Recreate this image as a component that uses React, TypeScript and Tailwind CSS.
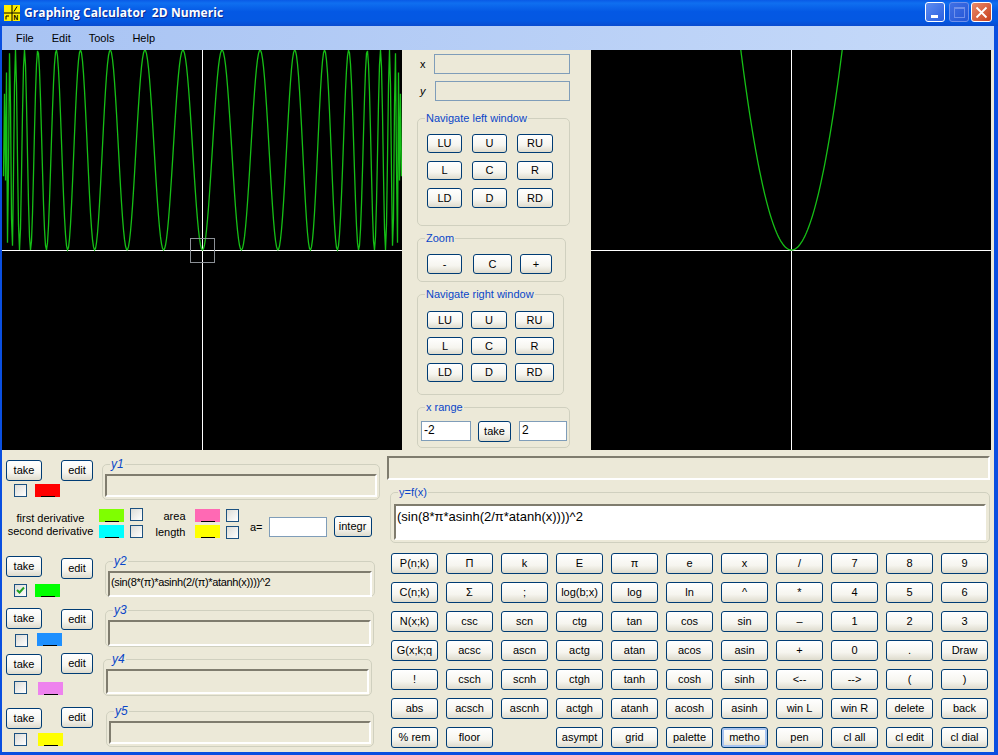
import React from "react";

function leftCurve(): string {
  const pts: string[] = [];
  for (let p = 0.5; p < 400; p += 1) {
    const x = (p - 200.5) / 200;
    if (Math.abs(x) >= 1) continue;
    const v = Math.sin(8 * Math.PI * Math.asinh((2 / Math.PI) * Math.atanh(x))) ** 2;
    pts.push(`${p.toFixed(2)},${(200 - 200 * v).toFixed(2)}`);
  }
  return pts.join(" ");
}

function rightCurve(): string {
  const pts: string[] = [];
  for (let dx = -54; dx <= 54; dx += 1) {
    pts.push(`${200.5 + dx},${(200 - 200 * (dx / 50.7) ** 2).toFixed(2)}`);
  }
  return pts.join(" ");
}

function Plot({ points, box }: { points: string; box?: boolean }) {
  return (
    <svg viewBox="0 0 400 400" className="w-[400px] h-[400px] shrink-0 bg-black block">
      <line x1="200.5" y1="0" x2="200.5" y2="400" stroke="#ffffff" strokeWidth="1" />
      <line x1="0" y1="200.5" x2="400" y2="200.5" stroke="#ffffff" strokeWidth="1" />
      <polyline points={points} fill="none" stroke="#16bf16" strokeWidth="1.3" />
      {box && <rect x="188.5" y="188.5" width="24" height="24" fill="none" stroke="#8b9096" strokeWidth="1" />}
    </svg>
  );
}

function Btn({ children, className = "", focused }: { children?: React.ReactNode; className?: string; focused?: boolean }) {
  return (
    <button
      className={`flex items-center justify-center shrink-0 border border-[#003c74] rounded-[3px] bg-[linear-gradient(180deg,#ffffff_0%,#f6f5ef_60%,#dedbcd_100%)] text-[11px] leading-none text-black ${focused ? "shadow-[inset_0_0_0_2px_#a8c4f0]" : ""} ${className}`}
    >
      {children}
    </button>
  );
}

function Group({ label, className = "", legendClass = "", children }: { label: string; className?: string; legendClass?: string; children?: React.ReactNode }) {
  return (
    <fieldset className={`border border-[#d0d0bf] rounded-[5px] shrink-0 min-w-0 ${className}`}>
      <legend className={`text-[#0a46c8] leading-[14px] px-[1px] ${legendClass}`}>{label}</legend>
      {children}
    </fieldset>
  );
}

function Sunken({ className = "", children }: { className?: string; children?: React.ReactNode }) {
  return (
    <div className={`border-t-2 border-l-2 border-t-[#7f7c6e] border-l-[#7f7c6e] border-r-2 border-b-2 border-r-white border-b-white ${className}`}>
      {children}
    </div>
  );
}

function Check({ checked, className = "" }: { checked?: boolean; className?: string }) {
  return (
    <div className={`w-[13px] h-[13px] shrink-0 border border-[#1c5180] bg-[linear-gradient(135deg,#dcdcd7,#ffffff)] flex items-center justify-center ${className}`}>
      {checked && (
        <svg viewBox="0 0 11 11" className="w-[11px] h-[11px]">
          <path d="M2 5 L4.5 7.5 L9 2.5" fill="none" stroke="#21a121" strokeWidth="2" />
        </svg>
      )}
    </div>
  );
}

function Swatch({ color, className = "" }: { color: string; className?: string }) {
  return (
    <div className={`w-[25px] h-[13px] shrink-0 flex items-end justify-center ${color} ${className}`}>
      <div className="w-[14px] h-[1px] bg-black" />
    </div>
  );
}

function FnRow(p: {
  label: string;
  rowClass: string;
  takeClass: string;
  editClass: string;
  lineClass: string;
  checkClass: string;
  swatchClass: string;
  color: string;
  checked?: boolean;
  leftClass: string;
  groupClass: string;
  innerClass: string;
  legendClass: string;
  text?: string;
}) {
  return (
    <div className={`flex shrink-0 ${p.rowClass}`}>
      <div className={`shrink-0 flex flex-col ${p.leftClass}`}>
        <div className={`flex items-start shrink-0 ${p.lineClass}`}>
          <Btn className={`w-[36px] h-[21px] ml-[4px] ${p.takeClass}`}>take</Btn>
          <Btn className={`w-[32px] h-[21px] ml-[19px] ${p.editClass}`}>edit</Btn>
        </div>
        <div className="flex items-start">
          <Check className={p.checkClass} checked={p.checked} />
          <Swatch color={p.color} className={p.swatchClass} />
        </div>
      </div>
      <Group label={p.label} className={`px-[2px] h-full ${p.groupClass}`} legendClass={`italic text-[12px] ${p.legendClass}`}>
        <Sunken className={`mt-[3px] flex items-start pl-[1px] pt-[2px] text-[11px] tracking-[-0.35px] leading-[14px] ${p.innerClass}`}>
          {p.text}
        </Sunken>
      </Group>
    </div>
  );
}

const keys: string[][] = [
  ["P(n;k)", "Π", "k", "Ε", "π", "e", "x", "/", "7", "8", "9"],
  ["C(n;k)", "Σ", ";", "log(b;x)", "log", "ln", "^", "*", "4", "5", "6"],
  ["N(x;k)", "csc", "scn", "ctg", "tan", "cos", "sin", "–", "1", "2", "3"],
  ["G(x;k;q", "acsc", "ascn", "actg", "atan", "acos", "asin", "+", "0", ".", "Draw"],
  ["!", "csch", "scnh", "ctgh", "tanh", "cosh", "sinh", "<--", "-->", "(", ")"],
  ["abs", "acsch", "ascnh", "actgh", "atanh", "acosh", "asinh", "win L", "win R", "delete", "back"],
  ["% rem", "floor", "", "asympt", "grid", "palette", "metho", "pen", "cl all", "cl edit", "cl dial"],
];

function NavButtons({ colClass, rows, gapClass }: { colClass: string[]; rows: string[]; gapClass: string }) {
  const labels = [["LU", "U", "RU"], ["L", "C", "R"], ["LD", "D", "RD"]];
  return (
    <div className="flex flex-col">
      {labels.map((row, i) => (
        <div key={i} className={`flex ${gapClass} ${rows[i]}`}>
          {row.map((t, j) => (
            <Btn key={t} className={`h-full ${colClass[j]}`}>{t}</Btn>
          ))}
        </div>
      ))}
    </div>
  );
}

export default function App() {
  const left = React.useMemo(leftCurve, []);
  const right = React.useMemo(rightCurve, []);
  return (
    <div className="w-[998px] h-[755px] overflow-hidden flex flex-col bg-[#0a4fe0] font-['Liberation_Sans',sans-serif] text-black">
      {/* title bar */}
      <div className="h-[26px] shrink-0 flex items-center pl-[4px] pr-[6px] bg-[linear-gradient(180deg,#0a5ae6_0%,#0f6ff0_12%,#0458e4_45%,#0458e2_80%,#0a4cd0_100%)]">
        <svg viewBox="0 0 16 16" className="w-[16px] h-[16px] shrink-0">
          <rect width="16" height="16" fill="#ffee00" />
          <path d="M8 0V16M0 8H16" stroke="#000" strokeWidth="1" />
          <path d="M10 6.5L13 1.5M2 14.5V11H5" stroke="#000" strokeWidth="1" fill="none" />
          <text x="9.6" y="15" fontSize="6.5" fontWeight="700" fill="#000">N</text>
        </svg>
        <span className="ml-[4px] text-white font-bold text-[12px] tracking-[0.08px] leading-none font-['Open_Sans',sans-serif] whitespace-pre [text-shadow:1px_1px_0_#0a2a90]">Graphing Calculator  2D Numeric</span>
        <div className="ml-auto flex items-center -mt-[2px]">
          <div className="w-[20px] h-[20px] rounded-[3px] border border-white bg-[linear-gradient(135deg,#5f8df0,#2a5fe0)] flex items-end pl-[5px] pb-[3px]">
            <div className="w-[7px] h-[3px] bg-white" />
          </div>
          <div className="w-[20px] h-[20px] ml-[4px] rounded-[3px] border border-[#6f90ea] bg-[linear-gradient(135deg,#4070e4,#2456d6)] flex items-center justify-center">
            <div className="w-[11px] h-[11px] border border-[#6f90ea] border-t-2" />
          </div>
          <div className="w-[21px] h-[20px] ml-[2px] rounded-[3px] border border-white bg-[linear-gradient(135deg,#e98a6c,#c8401c)] flex items-center justify-center">
            <svg viewBox="0 0 13 13" className="w-[13px] h-[13px]">
              <path d="M1.5 1.5L11.5 11.5M11.5 1.5L1.5 11.5" stroke="#fff" strokeWidth="1.8" />
            </svg>
          </div>
        </div>
      </div>

      {/* body */}
      <div className="flex-1 min-h-0 ml-[2px] mr-[4px] mb-[3px] flex flex-col bg-[#ece9d8]">
        {/* menu */}
        <div className="h-[24px] shrink-0 flex items-center pl-[14px] gap-[18px] text-[11px] bg-[linear-gradient(90deg,#a8c3f3,#c6daf9)]">
          <span>File</span>
          <span>Edit</span>
          <span>Tools</span>
          <span>Help</span>
        </div>

        {/* plots */}
        <div className="h-[400px] shrink-0 flex">
          <Plot points={left} box />
          <div className="w-[189px] shrink-0 flex flex-col pl-[15px]">
            <div className="flex items-center mt-[4px] h-[20px]">
              <span className="w-[17px] pl-[3px] text-[11px]">x</span>
              <div className="w-[136px] h-[20px] border border-[#7f9db9]" />
            </div>
            <div className="flex items-center mt-[7px] h-[20px]">
              <span className="w-[18px] pl-[3px] text-[11px] italic">y</span>
              <div className="w-[135px] h-[20px] border border-[#7f9db9]" />
            </div>
            <Group label="Navigate left window" className="w-[153px] h-[115px] mt-[10px] pl-[9px] pt-[9px]" legendClass="text-[11px] -ml-[2px]">
              <NavButtons
                colClass={["w-[35px]", "w-[35px]", "w-[36px]"]}
                rows={["h-[19px]", "h-[19px] mt-[8px]", "h-[20px] mt-[8px]"]}
                gapClass="gap-[10px]"
              />
            </Group>
            <Group label="Zoom" className="w-[149px] h-[51px] mt-[5px] pl-[9px] pt-[9px]" legendClass="text-[11px] -ml-[2px]">
              <div className="flex h-[20px]">
                <Btn className="w-[35px] h-full">-</Btn>
                <Btn className="w-[39px] h-full ml-[11px]">C</Btn>
                <Btn className="w-[32px] h-full ml-[8px]">+</Btn>
              </div>
            </Group>
            <Group label="Navigate right window" className="w-[147px] h-[108px] mt-[5px] pl-[9px] pt-[10px]" legendClass="text-[11px] -ml-[2px]">
              <NavButtons
                colClass={["w-[36px]", "w-[36px]", "w-[39px]"]}
                rows={["h-[18px]", "h-[18px] mt-[8px]", "h-[19px] mt-[8px]"]}
                gapClass="gap-[8px]"
              />
            </Group>
            <Group label="x range" className="w-[153px] h-[48px] mt-[5px] pl-[3px] pt-[7px]" legendClass="text-[11px] ml-[4px]">
              <div className="flex items-start">
                <div className="w-[50px] h-[20px] bg-white border border-[#7f9db9] text-[12px] leading-[16px] pl-[2px]">-2</div>
                <Btn className="w-[33px] h-[21px] ml-[7px]">take</Btn>
                <div className="w-[48px] h-[20px] ml-[8px] bg-white border border-[#7f9db9] text-[12px] leading-[16px] pl-[2px]">2</div>
              </div>
            </Group>
          </div>
          <Plot points={right} />
        </div>

        {/* lower part */}
        <div className="flex-1 min-h-0 flex">
          {/* left column */}
          <div className="w-[383px] shrink-0 flex flex-col">
            <FnRow
              label="y1" rowClass="h-[43px] mt-[7px]" takeClass="mt-[3px]" editClass="mt-[3px]" lineClass="h-[27px]"
              checkClass="ml-[12px]" swatchClass="ml-[8px]" color="bg-[#ff0000]" leftClass="w-[100px]"
              groupClass="w-[278px]" innerClass="h-[23px]" legendClass="ml-[5px]"
            />
            {/* derivative row */}
            <div className="flex h-[30px] mt-[8px] shrink-0 items-start text-[11px] leading-[14px]">
              <div className="w-[97px] shrink-0 text-center pt-[4px] leading-[13px]">
                <div>first derivative</div>
                <div>second derivative</div>
              </div>
              <div className="flex flex-col gap-[3px] mt-[1px]">
                <Swatch color="bg-[#7fff00]" />
                <Swatch color="bg-[#00ffff]" />
              </div>
              <div className="flex flex-col gap-[4px] ml-[6px]">
                <Check />
                <Check />
              </div>
              <div className="w-[49px] text-center shrink-0 ml-[3px] flex flex-col gap-[2px] pt-[1px]">
                <div className="pl-[8px]">area</div>
                <div>length</div>
              </div>
              <div className="flex flex-col gap-[3px] mt-[1px]">
                <Swatch color="bg-[#ff69b4]" />
                <Swatch color="bg-[#ffff00]" />
              </div>
              <div className="flex flex-col gap-[4px] ml-[6px] mt-[1px]">
                <Check />
                <Check />
              </div>
              <span className="ml-[11px] mt-[12px] shrink-0">a=</span>
              <div className="w-[58px] h-[20px] ml-[6px] mt-[9px] bg-white border border-[#7f9db9] shrink-0" />
              <Btn className="w-[38px] h-[21px] ml-[7px] mt-[8px]">integr</Btn>
            </div>
            <FnRow
              label="y2" rowClass="h-[43px] mt-[16px]" takeClass="mt-[2px]" editClass="mt-[4px]" lineClass="h-[30px]"
              checkClass="ml-[12px]" swatchClass="ml-[8px]" color="bg-[#00ff00]" checked leftClass="w-[103px]"
              groupClass="w-[270px]" innerClass="h-[26px]" legendClass="ml-[5px]" text="(sin(8*(π)*asinh(2/(π)*atanh(x))))^2"
            />
            <FnRow
              label="y3" rowClass="h-[44px] mt-[6px]" takeClass="mt-[5px]" editClass="mt-[6px]" lineClass="h-[31px]"
              checkClass="ml-[13px]" swatchClass="ml-[9px] -mt-[1px]" color="bg-[#1e90ff]" leftClass="w-[103px]"
              groupClass="w-[269px]" innerClass="h-[26px]" legendClass="ml-[5px]"
            />
            <FnRow
              label="y4" rowClass="h-[44px] mt-[5px]" takeClass="mt-[2px]" editClass="mt-[1px]" lineClass="h-[29px]"
              checkClass="ml-[12px]" swatchClass="ml-[11px] mt-[1px]" color="bg-[#ee82ee]" leftClass="w-[101px]"
              groupClass="w-[269px]" innerClass="h-[25px]" legendClass="ml-[5px]"
            />
            <FnRow
              label="y5" rowClass="h-[43px] mt-[8px]" takeClass="mt-[4px]" editClass="mt-[3px]" lineClass="h-[29px]"
              checkClass="ml-[12px]" swatchClass="ml-[11px]" color="bg-[#ffff00]" leftClass="w-[104px]"
              groupClass="w-[268px]" innerClass="h-[23px]" legendClass="ml-[5px]"
            />
          </div>

          {/* right column */}
          <div className="flex-1 min-w-0 flex flex-col">
            <Sunken className="w-[603px] h-[24px] ml-[2px] mt-[6px] shrink-0" />
            <Group label="y=f(x)" className="w-[600px] h-[58px] ml-[5px] mt-[5px] px-[3px]" legendClass="text-[11px] ml-[4px]">
              <Sunken className="h-[36px] mt-[5px] bg-white pl-[1px] pt-[2px] text-[13px] leading-[17px]">
                (sin(8*π*asinh(2/π*atanh(x))))^2
              </Sunken>
            </Group>
            <div className="grid grid-cols-[repeat(11,47px)] auto-rows-[21px] gap-x-[8px] gap-y-[8px] ml-[6px] mt-[10px]">
              {keys.flat().map((k, i) =>
                k === "" ? <div key={i} /> : <Btn key={i} focused={k === "metho"} className="w-full h-full">{k}</Btn>
              )}
            </div>
          </div>
        </div>
      </div>
    </div>
  );
}
